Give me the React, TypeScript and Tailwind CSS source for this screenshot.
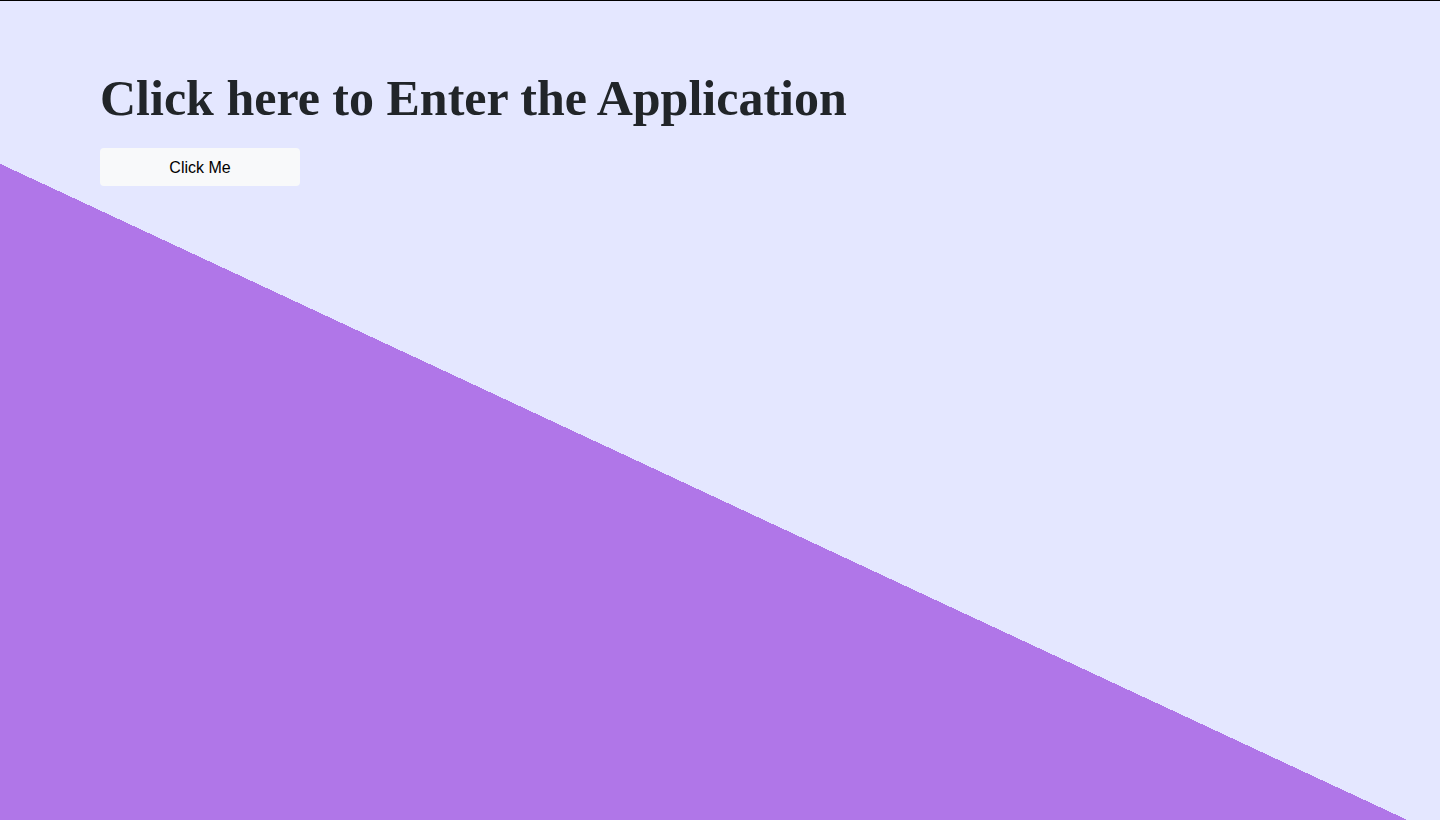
export default function App() {
  return (
    <main className="min-h-screen border-t border-black bg-[linear-gradient(25deg,#b076e8_44%,#e4e7ff_44%)] bg-origin-border px-[100px] pt-[67px]">
      <h1 className="mb-5 font-['Liberation_Serif',serif] text-[50px] leading-[60px] font-bold text-[#212529]">
        Click here to Enter the Application
      </h1>
      <button
        type="button"
        className="block w-[200px] rounded bg-[#f8f9fa] px-3 pt-2 pb-1.5 font-['Liberation_Sans',sans-serif] text-base text-black"
      >
        Click Me
      </button>
    </main>
  );
}
